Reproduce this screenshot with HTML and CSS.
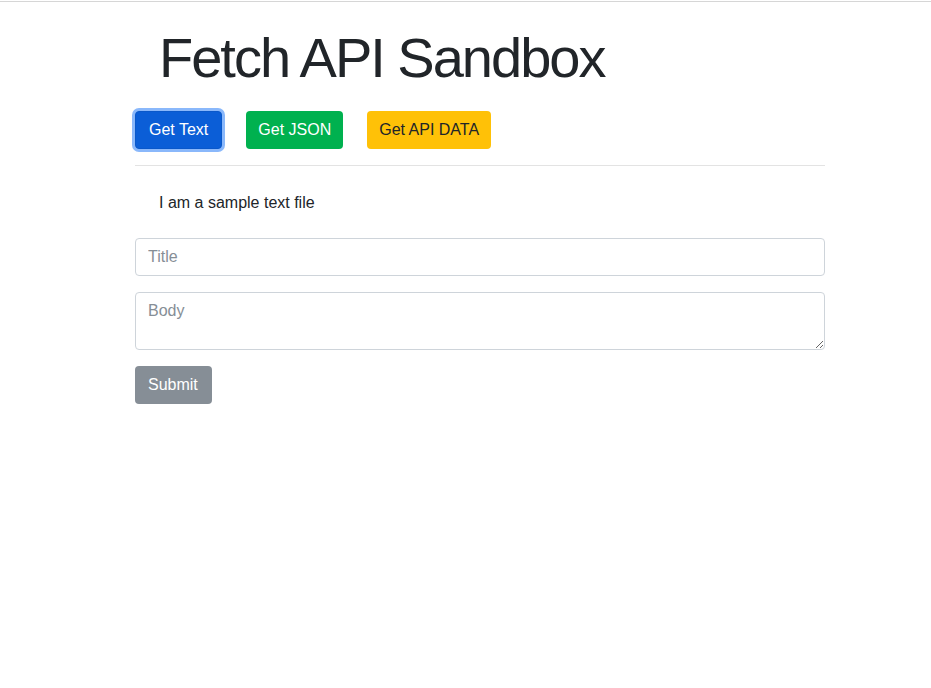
FILE: index.html
```html
<!DOCTYPE html>
<html lang="en">
<head>
<meta charset="utf-8">
<title>Fetch API Sandbox</title>
<link rel="stylesheet" href="styles.css">
</head>
<body>
<div class="topline"></div>
<div class="container">
  <h1 class="title">Fetch API Sandbox</h1>
  <div class="actions">
    <button class="btn btn-primary is-focused" type="button">Get Text</button>
    <button class="btn btn-success" type="button">Get JSON</button>
    <button class="btn btn-warning" type="button">Get API DATA</button>
  </div>
  <hr class="divider">
  <div class="output">I am a sample text file</div>
  <form class="post-form">
    <input class="field" type="text" placeholder="Title">
    <textarea class="field field-area" rows="2" placeholder="Body"></textarea>
    <button class="btn btn-secondary" type="button">Submit</button>
  </form>
</div>
</body>
</html>
```
FILE: styles.css
```css
html, body {
  margin: 0;
  padding: 0;
  background: #fff;
}
body {
  font-family: "Liberation Sans", Arial, sans-serif;
  font-size: 16px;
  line-height: 1.5;
  color: #212529;
}
.topline {
  height: 1px;
  margin-top: 1px;
  background: #d6d6d6;
}
.container {
  width: 690px;
  margin-left: 135px;
}
.title {
  margin: 22px 0 20px 24px;
  font-size: 56px;
  font-weight: 400;
  line-height: 1.2;
  letter-spacing: -2px;
}
.actions {
  display: flex;
  gap: 24px;
}
.btn {
  font-family: inherit;
  font-size: 16px;
  line-height: 24px;
  padding: 6px 12px;
  border: 1px solid transparent;
  border-radius: 4px;
  cursor: pointer;
}
.btn-primary {
  background: #0b5ed7;
  border-color: #0a58ca;
  color: #fff;
  padding: 6px 13px;
}
.is-focused {
  box-shadow: 0 0 0 3px #8ab8fb;
}
.btn-success {
  background: #00b14f;
  color: #fff;
  padding: 6px 11px;
}
.btn-warning {
  background: #ffc107;
  color: #212529;
  padding: 6px 11px;
}
.btn-secondary {
  background: #868e96;
  color: #fff;
  padding: 6px 13px 6px 12px;
}
.divider {
  margin: 16px 0 0;
  border: 0;
  border-top: 1px solid #e3e3e3;
}
.output {
  padding: 25px 24px 23px 24px;
}
.post-form {
  display: flex;
  flex-direction: column;
  align-items: flex-start;
  gap: 16px;
}
.field {
  box-sizing: border-box;
  width: 100%;
  font-family: inherit;
  font-size: 16px;
  line-height: 24px;
  padding: 6px 12px;
  border: 1px solid #ced4da;
  border-radius: 4px;
  color: #212529;
  margin: 0;
}
.field::placeholder {
  color: #868e96;
}
.field-area {
  height: 58px;
  resize: vertical;
  display: block;
}
```
